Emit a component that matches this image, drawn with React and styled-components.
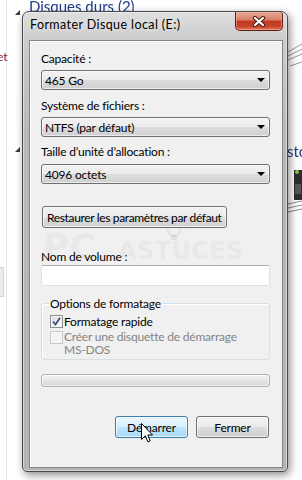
import styled, { createGlobalStyle } from "styled-components";

const UI_FONT = `"Segoe UI", Lato, "Noto Sans", sans-serif`;

const GlobalStyle = createGlobalStyle`
  *, *::before, *::after { box-sizing: border-box; }
  html, body { margin: 0; padding: 0; background: #fff; }
  body { font-family: ${UI_FONT}; }
`;

const Desktop = styled.div`
  position: relative;
  width: 302px;
  height: 480px;
  overflow: hidden;
  background: #fff;
  font-family: ${UI_FONT};
`;

/* explorer content showing behind the dialog */
const NavLine = styled.div`
  position: absolute;
  left: 6px;
  top: 0;
  width: 1px;
  height: 480px;
  background: #dfe7ef;
`;

const GroupTitle = styled.div`
  position: absolute;
  left: ${(p) => p.$x}px;
  top: ${(p) => p.$y}px;
  font-size: 15px;
  line-height: 18px;
  color: #1e3c87;
  white-space: nowrap;
  filter: blur(0.5px);
`;

const Expander = styled.div`
  position: absolute;
  left: 15px;
  top: ${(p) => p.$y}px;
  width: 0;
  height: 0;
  border-left: 5px solid transparent;
  border-bottom: 5px solid #3a3a3a;
`;

const RedText = styled.div`
  position: absolute;
  left: -3px;
  top: 49px;
  font-size: 12px;
  line-height: 15px;
  color: #8e1b3b;
`;

const SideTab = styled.div`
  position: absolute;
  left: 0;
  top: 267px;
  width: 4px;
  height: 30px;
  background: #ececec;
  border: 1px solid #d3d3d3;
  border-left: none;
`;

const SideArt = styled.svg`
  position: absolute;
  left: 287px;
  top: ${(p) => p.$y}px;
`;

/* the dialog */
const Window = styled.div`
  position: absolute;
  left: 22px;
  top: 11px;
  width: 266px;
  height: 461px;
  display: flex;
  flex-direction: column;
  padding: 0 4px 3px 6px;
  border: 1px solid #4a4a4a;
  border-radius: 7px 7px 5px 5px;
  background: linear-gradient(
    to bottom,
    #dedede 0px,
    #cbcbcb 28px,
    #b9b9b9 120px,
    #b4b4b4 100%
  );
  box-shadow: inset 0 0 0 1px rgba(255, 255, 255, 0.45),
    2px 3px 8px rgba(0, 0, 0, 0.45);
`;

const TitleBar = styled.div`
  height: 28px;
  flex: none;
  display: flex;
  align-items: flex-start;
  justify-content: space-between;
`;

const Title = styled.div`
  padding: 5px 0 0 1px;
  font-size: 12.5px;
  line-height: 15px;
  letter-spacing: 0.4px;
  color: #000;
  text-shadow: 0 0 6px rgba(255, 255, 255, 0.9);
`;

const CloseButton = styled.div`
  width: 48px;
  height: 19px;
  display: flex;
  align-items: center;
  justify-content: center;
  border: 1px solid #5e1d12;
  border-top: none;
  border-radius: 0 3px 5px 5px;
  background: linear-gradient(
    to bottom,
    #e7a898 0%,
    #d97d67 45%,
    #c3391f 50%,
    #c8432a 80%,
    #df7a5c 100%
  );
  box-shadow: inset 0 0 0 1px rgba(255, 200, 180, 0.45);
`;

const Client = styled.div`
  position: relative;
  flex: 1;
  display: flex;
  flex-direction: column;
  padding: 10px 12px 0 11px;
  border: 1px solid #858585;
  background: #f0f0f0;
  box-shadow: inset 1px 1px 0 #ffffff;
  font-size: 12px;
  letter-spacing: -0.2px;
  color: #000;
`;

const Label = styled.div`
  position: relative;
  margin-top: ${(p) => p.$mt || 0}px;
  font-size: 12px;
  line-height: 15px;
  white-space: nowrap;
`;

const Select = styled.div`
  position: relative;
  margin-top: ${(p) => p.$mt || 0}px;
  height: 20px;
  display: flex;
  align-items: center;
  padding-left: 3px;
  border: 1px solid #707070;
  border-radius: 3px;
  background: linear-gradient(
    to bottom,
    #f2f2f2 0%,
    #ebebeb 50%,
    #dddddd 51%,
    #cfcfcf 100%
  );
  box-shadow: inset 0 0 0 1px rgba(255, 255, 255, 0.6);
  font-size: 12px;
  line-height: 15px;

  &::after {
    content: "";
    position: absolute;
    right: 4px;
    top: 7px;
    border-left: 4px solid transparent;
    border-right: 4px solid transparent;
    border-top: 4px solid #000;
  }
`;

const PushButton = styled.div`
  position: relative;
  height: 22px;
  display: flex;
  align-items: center;
  justify-content: center;
  padding: 0 4px;
  width: ${(p) => (p.$w ? `${p.$w}px` : "auto")};
  border: 1px solid ${(p) => (p.$hot ? "#3c7fb1" : "#707070")};
  border-radius: 3px;
  background: ${(p) =>
    p.$hot
      ? "linear-gradient(to bottom, #eaf6fd 0%, #d9f0fc 50%, #bee6fd 51%, #a7d9f5 100%)"
      : "linear-gradient(to bottom, #f2f2f2 0%, #ebebeb 50%, #dddddd 51%, #cfcfcf 100%)"};
  box-shadow: inset 0 0 0 1px rgba(255, 255, 255, 0.65);
  font-size: 12px;
  line-height: 15px;
  letter-spacing: ${(p) => (p.$tight ? "-0.35px" : "-0.2px")};
  white-space: nowrap;
  color: #000;
`;

const RestoreRow = styled.div`
  margin-top: 22px;
  display: flex;
  padding-left: 1px;
`;

const TextBox = styled.div`
  position: relative;
  margin-top: 1px;
  height: 21px;
  border: 1px solid #dfe3e8;
  border-top-color: #abadb3;
  border-radius: 2px;
  background: #fff;
`;

const Group = styled.fieldset`
  margin: 10px 0 0;
  padding: 0 8px 3px;
  border: 1px solid #d5dfe5;
  border-radius: 3px;
  box-shadow: inset 1px 1px 0 #fff;
  min-width: 0;
`;

const Legend = styled.legend`
  padding: 0 1px;
  margin-left: -1px;
  font-size: 12px;
  line-height: 15px;
`;

const CheckRow = styled.div`
  display: flex;
  align-items: flex-start;
  gap: 1px;
  margin-top: ${(p) => p.$mt || 0}px;
  font-size: 12px;
  line-height: ${(p) => (p.$disabled ? 13 : 15)}px;
  color: ${(p) => (p.$disabled ? "#838383" : "#000")};
`;

const Box = styled.div`
  flex: none;
  width: 13px;
  height: 13px;
  margin-top: 1px;
  display: flex;
  align-items: center;
  justify-content: center;
  border: 1px solid ${(p) => (p.$disabled ? "#c9c9c9" : "#8e8f8f")};
  background: ${(p) =>
    p.$disabled
      ? "#f4f4f4"
      : "linear-gradient(135deg, #d8d8d8 0%, #f0f0f0 60%, #ffffff 100%)"};
  box-shadow: inset 0 0 0 1px ${(p) => (p.$disabled ? "#f7f7f7" : "#f4f4f4")};
`;

const Progress = styled.div`
  margin-top: 14px;
  height: 13px;
  border: 1px solid #b2b2b2;
  border-radius: 3px;
  background: linear-gradient(to bottom, #f4f4f4 0%, #e6e6e6 50%, #d6d6d6 100%);
  box-shadow: inset 0 0 0 1px rgba(255, 255, 255, 0.6);
`;

const ButtonRow = styled.div`
  margin-top: 29px;
  display: flex;
  justify-content: flex-end;
  gap: 8px;
  padding-right: 1px;
`;

const Watermark = styled.div`
  position: absolute;
  left: 13px;
  top: 188px;
  display: flex;
  align-items: baseline;
  gap: 22px;
  pointer-events: none;
  font-family: "DejaVu Sans", "Noto Sans", sans-serif;
  font-weight: 700;
  letter-spacing: 0;
  color: rgba(0, 0, 0, 0.05);
`;

const MarkBig = styled.span`
  font-size: 36px;
  line-height: 36px;
`;

const MarkSmall = styled.span`
  position: relative;
  font-size: 24.5px;
  line-height: 30px;
`;

const Bulb = styled.svg`
  position: absolute;
  left: 43px;
  top: -17px;
`;

const Cursor = styled.svg`
  position: absolute;
  left: 141px;
  top: 423px;
`;

export default function App() {
  return (
    <Desktop>
      <GlobalStyle />
      <NavLine />
      <GroupTitle $x={29} $y={-3}>
        Disques durs (2)
      </GroupTitle>
      <Expander $y={10} />
      <Expander $y={147} />
      <RedText>et</RedText>
      <SideTab />
      <GroupTitle $x={287} $y={142}>
        stockage amovible
      </GroupTitle>
      <SideArt $y={42} width="15" height="32" viewBox="0 0 15 32">
        <path d="M1 10 L15 2 M1 14 L15 7 M1 18 L15 12 M3 24 L15 20" stroke="#9a9a9a" strokeWidth="1" fill="none" />
      </SideArt>
      <SideArt $y={162} width="15" height="40" viewBox="0 0 15 40">
        <rect x="7" y="8" width="8" height="30" fill="#2d2d2d" />
        <circle cx="10" cy="10" r="2" fill="#7ac943" />
        <rect x="8" y="22" width="6" height="10" fill="#555" />
      </SideArt>
      <SideArt $y={200} width="15" height="18" viewBox="0 0 15 18">
        <path d="M1 4 L15 1 M1 8 L15 5 M1 12 L15 9" stroke="#8a8a8a" strokeWidth="1" fill="none" />
      </SideArt>

      <Window>
        <TitleBar>
          <Title>Formater Disque local (E:)</Title>
          <CloseButton>
            <svg width="14" height="11" viewBox="0 0 14 11">
              <path d="M3 2 L11 9 M11 2 L3 9" stroke="#4b1a12" strokeWidth="4.2" strokeLinecap="round" />
              <path d="M3 2 L11 9 M11 2 L3 9" stroke="#ffffff" strokeWidth="2.2" strokeLinecap="round" />
            </svg>
          </CloseButton>
        </TitleBar>

        <Client>
          <Watermark>
            <MarkBig>PC</MarkBig>
            <MarkSmall>
              <Bulb width="26" height="22" viewBox="0 0 26 22">
                <circle cx="13" cy="10" r="6.5" fill="none" stroke="rgba(0,0,0,0.06)" strokeWidth="2" />
                <rect x="10" y="16" width="6" height="5" fill="rgba(0,0,0,0.06)" />
                <path d="M13 0 L13 2 M2 9 L4 9 M22 9 L24 9 M5 2 L6.5 3.5 M21 2 L19.5 3.5" stroke="rgba(0,0,0,0.06)" strokeWidth="1.5" />
              </Bulb>
              ASTUCES
            </MarkSmall>
          </Watermark>

          <Label>Capacité :</Label>
          <Select $mt={4}>465 Go</Select>
          <Label $mt={8}>Système de fichiers :</Label>
          <Select $mt={4}>NTFS (par défaut)</Select>
          <Label $mt={7}>Taille d’unité d’allocation :</Label>
          <Select $mt={5}>4096 octets</Select>

          <RestoreRow>
            <PushButton $tight>Restaurer les paramètres par défaut</PushButton>
          </RestoreRow>

          <Label $mt={21}>Nom de volume :</Label>
          <TextBox />

          <Group>
            <Legend>Options de formatage</Legend>
            <CheckRow $mt={3}>
              <Box>
                <svg width="9" height="9" viewBox="0 0 9 9">
                  <path d="M1 4.5 L3.5 7.5 L8 0.8" stroke="#3e5388" strokeWidth="1.8" fill="none" />
                </svg>
              </Box>
              Formatage rapide
            </CheckRow>
            <CheckRow $mt={1} $disabled>
              <Box $disabled />
              <span>
                Créer une disquette de démarrage
                <br />
                MS-DOS
              </span>
            </CheckRow>
          </Group>

          <Progress />

          <ButtonRow>
            <PushButton $w={73} $hot>
              Démarrer
            </PushButton>
            <PushButton $w={73}>Fermer</PushButton>
          </ButtonRow>
        </Client>
      </Window>

      <Cursor width="13" height="21" viewBox="0 0 13 21">
        <path
          d="M0.5 0.5 L0.5 16.5 L4.3 12.8 L6.8 18.8 L9.2 17.8 L6.8 12 L11.5 12 Z"
          fill="#fff"
          stroke="#000"
          strokeWidth="1"
          strokeLinejoin="miter"
        />
      </Cursor>
    </Desktop>
  );
}
